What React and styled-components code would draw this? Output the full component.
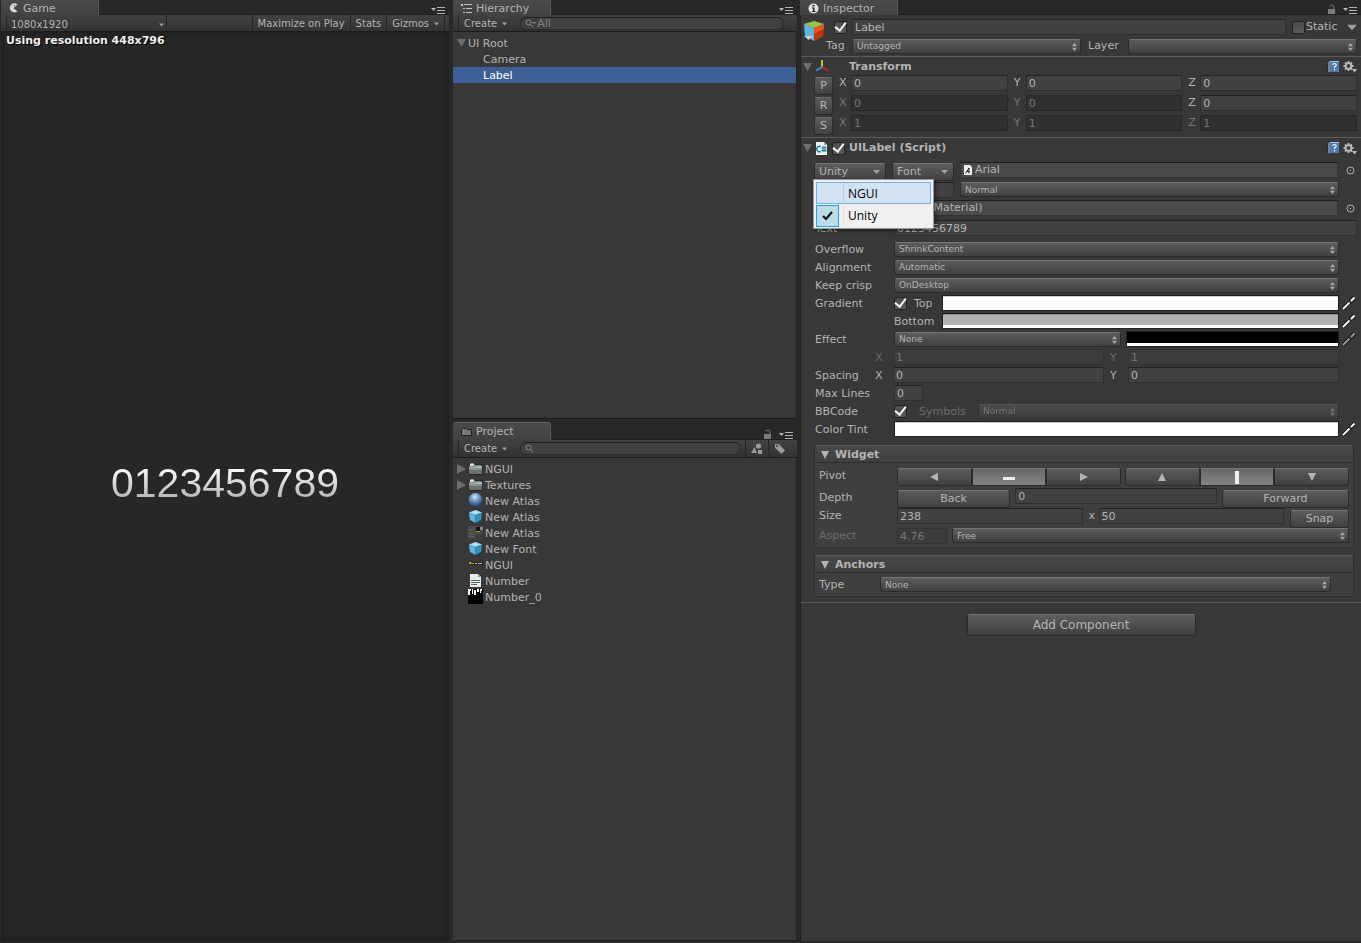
import React from 'react';
import styled, { createGlobalStyle, css } from 'styled-components';

const GlobalStyle = createGlobalStyle`
  * {
    box-sizing: border-box;
  }
  body {
    margin: 0;
    background: #282828;
    color: #b4b4b4;
    font-family: 'DejaVu Sans', Verdana, sans-serif;
    font-size: 11px;
    line-height: 16px;
  }
  button, input, select {
    margin: 0;
    padding: 0;
    border: 0;
    font: inherit;
    color: inherit;
  }
  ul {
    margin: 0;
    padding: 0;
    list-style: none;
  }
`;

const raised = css`
  border: 1px solid #2b2b2b;
  border-top-color: #757575;
  border-radius: 3px;
  background: linear-gradient(#5c5c5c, #404040);
`;

/* ---------- window layout ---------- */

const Editor = styled.main`
  display: grid;
  grid-template-columns: 450fr 347fr 564fr;
  min-height: 100vh;
  padding-bottom: 2px;
  background: #282828;
`;

const MiddleColumn = styled.div`
  display: grid;
  grid-template-rows: 420fr 521fr;
  row-gap: 3px;
  padding-left: 3px;
`;

const Panel = styled.section`
  display: flex;
  flex-direction: column;
  min-width: 0;
  padding-left: ${({ $inset }) => $inset || 0}px;
  padding-right: ${({ $end }) => $end || 0}px;
`;

const PanelHead = styled.header`
  display: flex;
  align-items: flex-end;
  height: ${({ $tall }) => ($tall ? 18 : 15)}px;
  border-bottom: 1px solid #1f1f1f;
`;

const Tab = styled.button`
  display: flex;
  align-items: center;
  gap: 4px;
  width: 98px;
  height: ${({ $top }) => ($top ? 18 : 16)}px;
  margin-bottom: -1px;
  padding: 2px 0 0 ${({ $pad }) => $pad || 8}px;
  border-top: 1px solid ${({ $top }) => ($top ? '#666' : '#484848')};
  border-right: 1px solid #5a5a5a;
  border-radius: ${({ $top }) => ($top ? '3px 3px 0 0' : '0')};
  background: linear-gradient(#4a4a4a, #424242);
`;

const HeadTools = styled.div`
  display: flex;
  align-items: flex-end;
  gap: 7px;
  margin-left: auto;
  padding: 0 4px 0 0;
`;

const ToolIcon = styled.button`
  display: flex;
  background: none;
`;

const Toolbar = styled.div`
  display: flex;
  height: ${({ $tall }) => ($tall ? 18 : 17)}px;
  padding: 0 ${({ $tall }) => ($tall ? 6 : 0)}px 0 5px;
  border-bottom: 1px solid #1c1c1c;
  background: linear-gradient(#424242, #323232);
  font-size: 10px;
`;

const ToolbarButton = styled.button`
  display: flex;
  align-items: center;
  gap: 5px;
  padding: 2px 5px 0;
  border-left: 1px solid #262626;
  background: none;
  white-space: nowrap;
`;

const ToolbarEnd = styled.div`
  display: flex;
  margin: 0 4px 0 auto;
  border-right: 1px solid #262626;
`;

const ToolbarSelect = styled.span`
  position: relative;
  display: flex;
  width: 161px;
  border: solid #262626;
  border-width: 0 1px;
  select {
    flex: 1;
    padding: 2px 0 0 4px;
    appearance: none;
    background: none;
  }
  svg {
    position: absolute;
    right: 2px;
    top: 8px;
    pointer-events: none;
  }
`;

const SearchBox = styled.label`
  display: flex;
  align-items: center;
  gap: 1px;
  flex: 1;
  height: 13px;
  margin: 2px ${({ $end }) => $end}px 0 8px;
  padding-left: 4px;
  border: 1px solid #2a2a2a;
  border-top-color: #1e1e1e;
  border-radius: 7px;
  background: #404040;
  color: #828282;
  font-size: 11px;
  input {
    flex: 1;
    width: 0;
    height: 11px;
    background: none;
  }
`;

/* ---------- game view ---------- */

const GameView = styled.div`
  display: flex;
  flex: 1;
  flex-direction: column;
  background: #272727;
  box-shadow: inset 0 0 8px #1a1a1a;
`;

const Resolution = styled.p`
  margin: 0;
  padding: 1px 5px;
  color: #f0f0f0;
  font-weight: bold;
  text-shadow: 1px 1px 1px #000;
`;

const Stage = styled.div`
  display: flex;
  flex: 1;
  align-items: center;
  justify-content: center;
  padding-bottom: 26px;
`;

const GameLabel = styled.span`
  background: linear-gradient(#fff 10%, #b3b3b3 90%);
  background-clip: text;
  color: transparent;
  font-family: 'Liberation Sans', Arial, sans-serif;
  font-size: 41px;
  line-height: 42px;
`;

/* ---------- trees ---------- */

const Tree = styled.ul`
  flex: 1;
  padding-top: 3px;
  border-right: 1px solid #222;
  border-bottom: 1px solid #1c1c1c;
  background: #383838;
`;

const TreeItem = styled.button`
  display: flex;
  align-items: center;
  gap: 2px;
  width: 100%;
  height: 16px;
  padding-left: ${({ $indent }) => $indent}px;
  background: ${({ $selected }) => ($selected ? '#3e5f96' : 'none')};
  color: ${({ $selected }) => ($selected ? '#fff' : 'inherit')};
  line-height: 14px;
  svg {
    flex: none;
  }
  span {
    padding-top: 2px;
  }
`;

/* ---------- inspector ---------- */

const Inspect = styled.div`
  flex: 1;
  border-left: 1px solid #222;
  background: #383838;
`;

const ObjectHeader = styled.div`
  display: flex;
  height: 42px;
  padding: 4px 4px 0 2px;
  border-bottom: 1px solid #5a5a5a;
`;

const ObjectRows = styled.div`
  display: flex;
  flex: 1;
  flex-direction: column;
  gap: 3px;
`;

const ObjectRow = styled.div`
  display: flex;
  align-items: center;
  height: 16px;
`;

const TagLabel = styled.label`
  width: ${({ $width }) => $width}px;
  padding-left: ${({ $pad }) => $pad || 0}px;
`;

const Component = styled.section`
  padding-bottom: ${({ $end }) => $end || 0}px;
  border-bottom: 1px solid #5a5a5a;
`;

const ComponentHead = styled.div`
  display: flex;
  align-items: center;
  gap: 3px;
  height: ${({ $height }) => $height}px;
  padding: ${({ $top }) => $top || 0}px 4px 0 2px;
`;

const ComponentTitle = styled.h2`
  flex: 1;
  margin: 0;
  padding-left: ${({ $pad }) => $pad || 0}px;
  font-size: 11px;
`;

const AxisRow = styled.div`
  display: flex;
  height: 20px;
  padding: 0 4px 0 13px;
`;

const AxisButton = styled.button`
  ${raised}
  width: 19px;
  height: 18px;
  margin-top: 2px;
  border-top-color: #6c6c6c;
`;

const Axis = styled.label`
  display: flex;
  flex: 1;
  height: 16px;
  color: ${({ $dim }) => ($dim ? '#777' : 'inherit')};
  span {
    width: 18px;
    padding-left: 6px;
  }
`;

const TextField = styled.input`
  flex: ${({ $width }) => ($width ? 'none' : '1 1 0')};
  width: ${({ $width }) => ($width ? `${$width}px` : 'auto')};
  min-width: 0;
  height: 16px;
  padding: 1px 2px 0;
  border: 1px solid #2f2f2f;
  border-top-color: #222;
  background: #414141;
  color: #b4b4b4;
  &:disabled {
    border-color: ${({ $dark }) => ($dark ? '#282828' : '#333')};
    background: ${({ $dark }) => ($dark ? '#303030' : '#3c3c3c')};
    color: #777;
  }
`;

const PopupWrap = styled.span`
  position: relative;
  display: flex;
  flex: ${({ $grow }) => $grow || 1} 1 0;
  min-width: 0;
  opacity: ${({ $dim }) => ($dim ? 0.5 : 1)};
  select {
    ${raised}
    width: 100%;
    height: 15px;
    padding: 0 4px;
    appearance: none;
    font-size: 9px;
    line-height: 12px;
    opacity: 1;
  }
  svg {
    position: absolute;
    top: 4px;
    right: 4px;
    pointer-events: none;
  }
`;

const CheckBox = styled.input`
  flex: none;
  display: grid;
  place-items: center;
  width: 13px;
  height: 13px;
  border: 1px solid #222;
  border-radius: 2px;
  appearance: none;
  background: linear-gradient(#4a4a4a, #5c5c5c);
  &:checked::after {
    content: '';
    width: 5px;
    height: 9px;
    margin-top: -3px;
    border: solid #f4f4f4;
    border-width: 0 2px 2px 0;
    transform: rotate(38deg);
  }
`;

const LabelBody = styled.div`
  position: relative;
  padding: 4px 4px 0 13px;
`;

const SourceRow = styled.div`
  display: flex;
  align-items: flex-start;
  gap: 6px;
  height: ${({ $height }) => $height}px;
`;

const DropButton = styled.button`
  ${raised}
  display: flex;
  align-items: center;
  justify-content: space-between;
  width: ${({ $width }) => $width}px;
  height: 18px;
  margin-top: 1px;
  padding: 0 5px 0 4px;
`;

const ObjectField = styled.button`
  display: flex;
  flex: 1;
  align-items: center;
  gap: 2px;
  height: 16px;
  padding: 0 2px;
  border: 1px solid #333;
  border-top-color: #1e1e1e;
  background: #4a4a4a;
`;

const Picker = styled.button`
  display: flex;
  align-items: center;
  width: 13px;
  height: 16px;
  padding-left: 2px;
  background: none;
`;

const Field = styled.div`
  display: flex;
  align-items: ${({ $start }) => ($start ? 'flex-start' : 'center')};
  height: ${({ $height }) => $height || 18}px;
  padding: 0 ${({ $full }) => ($full ? 0 : 18)}px 0 1px;
`;

const FieldLabel = styled.label`
  flex: none;
  width: ${({ $width }) => $width || 79}px;
  padding-top: 1px;
  color: ${({ $dim }) => ($dim ? '#6c6c6c' : 'inherit')};
`;

const CheckCell = styled.span`
  display: flex;
  flex: none;
  width: ${({ $width }) => $width}px;
`;

const ColorBox = styled.span`
  display: flex;
  flex: ${({ $grow }) => $grow || 1} 1 0;
  flex-direction: column;
  min-width: 0;
  height: 16px;
  margin-left: ${({ $gap }) => $gap || 0}px;
  border: 1px solid #1c1c1c;
  border-bottom-color: #222;
  background: #fff;
  input {
    width: 100%;
    height: 11px;
    appearance: none;
    background: none;
  }
  input::-webkit-color-swatch-wrapper {
    padding: 0;
  }
  input::-webkit-color-swatch {
    border: 0;
    border-top: 1px solid #0003;
    border-radius: 0;
  }
`;

const Eyedropper = styled.button`
  display: flex;
  width: 15px;
  margin: 0 -18px 0 3px;
  background: none;
  color: ${({ $dim }) => ($dim ? '#999' : '#fff')};
`;

const Menu = styled.ul`
  position: absolute;
  top: 21px;
  left: 12px;
  z-index: 2;
  width: 121px;
  padding: 2px;
  border: 1px solid #979797;
  background: #f0f0f0;
  box-shadow: 2px 2px 3px #0006;
`;

const MenuItem = styled.button`
  display: grid;
  grid-template-columns: 22px 1fr;
  align-items: center;
  column-gap: 4px;
  width: 100%;
  height: 22px;
  border: 1px solid ${({ $hover }) => ($hover ? '#78aee5' : 'transparent')};
  background: ${({ $hover }) => ($hover ? '#d1e2f2' : 'none')};
  color: #000;
  font-family: 'Open Sans', 'Noto Sans', sans-serif;
  font-size: 12px;
  text-align: left;
  b {
    padding-left: 4px;
    border-left: 1px solid ${({ $hover }) => ($hover ? '#b9cbdc' : '#e0e0e0')};
    font-weight: normal;
    line-height: 20px;
  }
`;

const MenuCheck = styled.span`
  display: grid;
  place-items: center;
  height: 22px;
  margin-left: -1px;
  border: ${({ $on }) => ($on ? '1px solid #26a0da' : '0')};
  background: ${({ $on }) => ($on ? '#bcdcec' : 'none')};
`;

const Group = styled.div`
  margin: 7px 3px 0 0;
`;

const GroupHead = styled.button`
  display: flex;
  align-items: center;
  gap: 6px;
  width: 100%;
  height: 18px;
  padding: 1px 0 0 6px;
  border: 1px solid #2c2c2c;
  border-top-color: #5a5a5a;
  border-radius: 3px 3px 0 0;
  background: linear-gradient(#484848, #404040);
  font-weight: bold;
`;

const GroupBody = styled.div`
  padding: ${({ $pad }) => $pad};
  border: 1px solid #303030;
  border-top: 0;
  background: #3f3f3f;
`;

const GroupRow = styled.div`
  display: flex;
  align-items: flex-start;
  gap: ${({ $gap }) => $gap || 0}px;
  height: ${({ $height }) => $height || 20}px;
`;

const GroupLabel = styled.label`
  flex: none;
  align-self: ${({ $mid }) => ($mid ? 'center' : 'auto')};
  width: ${({ $width }) => $width}px;
  color: ${({ $dim }) => ($dim ? '#6c6c6c' : 'inherit')};
`;

const Segments = styled.div`
  display: flex;
  flex: 1;
`;

const Segment = styled.button`
  ${raised}
  display: flex;
  flex: 1;
  align-items: center;
  justify-content: center;
  height: 18px;
  border-radius: 0;
  &:first-child {
    border-radius: 3px 0 0 3px;
  }
  &:last-child {
    border-radius: 0 3px 3px 0;
  }
  ${({ $on }) => $on && 'background: linear-gradient(#686868, #858585); color: #eee;'}
`;

const PushButton = styled.button`
  ${raised}
  flex: ${({ $grow }) => $grow || 1} 1 0;
  min-width: 0;
  height: 18px;
  margin-top: 2px;
  line-height: 14px;
`;

const SnapWrap = styled.span`
  display: flex;
  width: 59px;
`;

const AddButton = styled.button`
  ${raised}
  display: block;
  width: 229px;
  height: 22px;
  margin: 11px auto 0;
  font-size: 12px;
`;

/* ---------- icons ---------- */

const DownIcon = ({ size = 5 }) => (
  <svg width={size} height={size - 1} viewBox="0 0 7 4" fill="#a0a0a0">
    <path d="M0 0H7L3.5 4Z" />
  </svg>
);

const Fold = ({ open }) => (
  <svg width="9" height="10" viewBox="0 0 9 10" fill="#6e6e6e">
    <path d={open ? 'M0 1H9L4.5 9Z' : 'M0 0L9 5L0 10Z'} />
  </svg>
);

const GroupFold = () => (
  <svg width="8" height="8" viewBox="0 0 8 8" fill="#b4b4b4">
    <path d="M0 0H8L4 8Z" />
  </svg>
);

const MenuIcon = () => (
  <svg width="14" height="8" viewBox="0 0 14 8" fill="#b4b4b4">
    <path d="M0 2H5L2.5 5ZM6 1H14V2H6ZM6 4H14V5H6ZM6 7H14V8H6Z" />
  </svg>
);

const LockIcon = () => (
  <svg width="9" height="10" viewBox="0 0 9 10">
    <path d="M1 5H8V10H1Z" fill="#7c7c7c" />
    <path d="M7 5V3Q7 1 5 1T3 2.5" fill="none" stroke="#7c7c7c" />
  </svg>
);

const GameIcon = () => (
  <svg width="10" height="11" viewBox="0 0 10 11">
    <path d="M8.5 1.5A4.6 4.6 0 1 0 8.5 8.2L4.5 5.2Z" fill="#d8d8d8" />
    <circle cx="5.4" cy="2.6" r="0.7" fill="#555" />
  </svg>
);

const ListIcon = () => (
  <svg width="11" height="10" viewBox="0 0 11 10" fill="#c8c8c8">
    <path d="M0 0H2V2H0ZM3 0H11V1H3ZM2 4H4V5H2ZM5 4H11V5H5ZM2 8H4V9H2ZM5 8H11V9H5Z" />
  </svg>
);

const InfoIcon = () => (
  <svg width="11" height="11" viewBox="0 0 11 11">
    <circle cx="5.5" cy="5.5" r="5" fill="#e0e0e0" />
    <path d="M4.5 2H6.5V3.5H4.5ZM4 4.5H6.5V8H7.5V9H4V8H5V5.5H4Z" fill="#222" />
  </svg>
);

const TabFolder = () => (
  <svg width="11" height="10" viewBox="0 0 11 10">
    <path d="M0.5 8.5V2.5L2 1.5H5L6 2.5H10.5V8.5Z" fill="#777" stroke="#222" />
  </svg>
);

const SearchIcon = ({ menu }) => (
  <svg width="11" height="9" viewBox="0 0 11 9" fill="none" stroke="#8c8c8c">
    <circle cx="3.5" cy="3.5" r="2.5" />
    <path d="M5.3 5.3L8 8" />
    {menu && <path d="M7 3H11L9 5Z" fill="#8c8c8c" stroke="none" />}
  </svg>
);

const ShapesIcon = () => (
  <svg width="12" height="12" viewBox="0 0 12 12" fill="#999">
    <circle cx="7.5" cy="3" r="2.6" />
    <path d="M0 10L3.5 4L6 10ZM7 7H11V11H7Z" />
  </svg>
);

const TagIcon = () => (
  <svg width="12" height="12" viewBox="0 0 12 12">
    <path d="M1 1H5L11 7.5L7.5 11L1 5Z" fill="#999" />
    <circle cx="3" cy="3" r="0.9" fill="#333" />
  </svg>
);

const FolderIcon = () => (
  <svg width="15" height="14" viewBox="0 0 15 14">
    <path d="M1 12.5V2H2L3 1H6L7 2.5H14V12.5Z" fill="#7e8889" stroke="#222" />
    <path d="M2 1.5H6V4H2Z" fill="#d5dada" />
    <path d="M1 5H7L8 4H14V6H1Z" fill="#a9b2b2" />
    <path d="M1 6H14V8H1Z" fill="#87908f" />
    <path d="M1 8H14V12H1Z" fill="#657173" />
  </svg>
);

const SphereIcon = () => (
  <svg width="15" height="15" viewBox="0 0 15 15">
    <defs>
      <radialGradient id="ball" cx="45%" cy="28%" r="65%">
        <stop offset="0" stopColor="#dce8f2" />
        <stop offset="0.45" stopColor="#6f9ccb" />
        <stop offset="1" stopColor="#25466e" />
      </radialGradient>
    </defs>
    <circle cx="7.5" cy="7" r="7" fill="url(#ball)" />
  </svg>
);

const CubeIcon = () => (
  <svg width="15" height="15" viewBox="0 0 15 15">
    <path d="M7.5 1L14 3.5L7.5 6L1 3.5Z" fill="#a9e2fa" />
    <path d="M1 3.5L7.5 6V14L2 11Z" fill="#59b9e4" />
    <path d="M14 3.5L7.5 6V14L13 11Z" fill="#3091c4" />
  </svg>
);

const AtlasIcon = () => (
  <svg width="15" height="15" viewBox="0 0 15 15">
    <path d="M0 1H15V14H0Z" fill="#4a4a4a" />
    <path d="M0 4H7V5H0ZM1 8H6V9H1ZM0 11H8V12H0Z" fill="#5b5b5b" />
    <path d="M8 2H12V6H8Z" fill="#111" />
    <path d="M12 2H15V5H12Z" fill="#8a8a8a" />
    <path d="M8 6H12V7H8Z" fill="#b99a35" />
    <path d="M7 9H15V14H7Z" fill="#3e3e3e" />
  </svg>
);

const LogoStrip = () => (
  <svg width="15" height="15" viewBox="0 0 15 15">
    <path d="M0 5H15V8H0Z" fill="#262626" />
    <path d="M1 5H3V7H1Z" fill="#d8a020" />
    <path d="M3 6H6V7H3Z" fill="#98a830" />
    <path d="M7 6H9V7H7ZM10 6H14V7H10Z" fill="#bbb" />
  </svg>
);

const FileIcon = () => (
  <svg width="15" height="15" viewBox="0 0 15 15">
    <path d="M2 1H10L13 4V14H2Z" fill="#e8ecec" />
    <path d="M10 1L13 4H10Z" fill="#999" />
    <path d="M3 7H12V8H3ZM3 9H12V10H3ZM3 11H9V12H3Z" fill="#566" />
  </svg>
);

const NumberTexture = () => (
  <svg width="15" height="15" viewBox="0 0 15 15">
    <path d="M0 0H15V15H0Z" fill="#000" />
    <path d="M0 0H3V2H2V6H0ZM4 0H5V5H4ZM6 1H8V6H6ZM9 0H11V3H9ZM12 0H14V2H13V4H12Z" fill="#fff" />
  </svg>
);

const ObjectCube = () => (
  <svg width="22" height="23" viewBox="0 0 22 23">
    <path d="M1 5L11 2L21 5L11 9Z" fill="#9cc545" />
    <path d="M1 5L11 9V22L2 17Z" fill="#5eb5e0" />
    <path d="M21 5L11 9V22L20 17Z" fill="#e8561c" />
    <path d="M11 15L20 10V17L11 22Z" fill="#c13509" />
    <path d="M1 17H10L5.5 21Z" fill="#d0d0d0" />
  </svg>
);

const TransformIcon = () => (
  <svg width="16" height="16" viewBox="0 0 16 16" fill="none" strokeWidth="2">
    <path d="M7 1V8" stroke="#9bd32a" />
    <path d="M7 8L1 11.5" stroke="#2f9bd8" />
    <path d="M7 8L13 11.5" stroke="#d5202a" />
  </svg>
);

const ScriptIcon = () => (
  <svg width="14" height="15" viewBox="0 0 14 15">
    <path d="M1 1H9L12 4V14H1Z" fill="#eef2f3" />
    <path d="M9 1L12 4H9Z" fill="#9aa5aa" />
    <path d="M5.8 5.5A2.8 2.8 0 1 0 5.8 10.5" fill="none" stroke="#1279ad" strokeWidth="1.5" />
    <path d="M8 5V11M10 5V11M6.5 7H11.5M6.5 9.5H11.5" fill="none" stroke="#1279ad" />
  </svg>
);

const FontIcon = () => (
  <svg width="10" height="12" viewBox="0 0 10 12">
    <path d="M1 1H7L9 3V11H1Z" fill="#eee" />
    <path d="M2.5 9.5L6 4V9.5M4 7.5H6.5" fill="none" stroke="#222" />
  </svg>
);

const HelpIcon = () => (
  <svg width="13" height="14" viewBox="0 0 13 14">
    <path d="M1 1H3V13H1Z" fill="#cfdcec" stroke="#16263f" />
    <path d="M3 1H12V12H3Z" fill="#4d78b0" />
    <path d="M3 1H12V2H3Z" fill="#a9c3e2" />
    <path d="M5.8 5Q5.8 3.5 7.5 3.5T9.2 5Q9.2 6 7.5 7V8M7.5 9V10.5" fill="none" stroke="#fff" strokeWidth="1.2" />
  </svg>
);

const GearIcon = () => (
  <svg width="14" height="13" viewBox="0 0 14 13">
    <circle cx="5.5" cy="6" r="2.8" fill="none" stroke="#bdbdbd" strokeWidth="1.8" />
    <path
      d="M5.5 1V3M5.5 9V11M0.5 6H2.5M8.5 6H10.5M2 2.5L3.4 3.9M7.6 8.1L9 9.5M2 9.5L3.4 8.1M7.6 3.9L9 2.5"
      stroke="#bdbdbd"
      strokeWidth="1.8"
    />
    <path d="M9 9H14L11.5 12.5Z" fill="#bdbdbd" />
  </svg>
);

const TargetIcon = () => (
  <svg width="9" height="9" viewBox="0 0 9 9">
    <circle cx="4.5" cy="4.5" r="3.5" fill="none" stroke="#b4b4b4" />
    <path d="M4 4H5V5H4Z" fill="#d0d0d0" />
  </svg>
);

const DropperIcon = () => (
  <svg width="14" height="14" viewBox="0 0 14 14" fill="none">
    <path d="M1 13L8 6" stroke="#111" strokeWidth="3.6" />
    <path d="M9 5L12.5 1.5" stroke="#111" strokeWidth="4.4" />
    <path d="M1 13L8.5 5.5" stroke="currentColor" strokeWidth="1.8" />
    <path d="M6.5 4.5L9.5 7.5" stroke="#222" strokeWidth="1.4" />
    <path d="M9 5L12.5 1.5" stroke="currentColor" strokeWidth="2.2" />
  </svg>
);

const TickIcon = () => (
  <svg width="11" height="10" viewBox="0 0 11 10">
    <path d="M1 5L4 8L10 1" fill="none" stroke="#111" strokeWidth="2.2" />
  </svg>
);

const UpDownIcon = () => (
  <svg width="5" height="8" viewBox="0 0 5 8" fill="#a8a8a8">
    <path d="M0 3.2L2.5 0L5 3.2ZM0 4.8L2.5 8L5 4.8Z" />
  </svg>
);

const pivotShapes = {
  Left: 'M10 2V10L2 6Z',
  Middle: 'M0 6H12V9H0Z',
  Right: 'M2 2V10L10 6Z',
  Top: 'M2 10H10L6 2Z',
  Center: 'M4 0H8V13H4Z',
  Bottom: 'M2 2H10L6 10Z',
};

const PivotIcon = ({ name }) => (
  <svg width="12" height="13" viewBox="0 0 12 13" fill="currentColor">
    <path d={pivotShapes[name]} />
  </svg>
);

/* ---------- parts ---------- */

function Popup({ id, label, value, grow, disabled }) {
  return (
    <PopupWrap $grow={grow} $dim={disabled}>
      <select id={id} aria-label={label} disabled={disabled}>
        <option>{value}</option>
      </select>
      <UpDownIcon />
    </PopupWrap>
  );
}

function ColorField({ id, label, value, grow, gap }) {
  return (
    <ColorBox $grow={grow} $gap={gap}>
      <input type="color" id={id} aria-label={label} defaultValue={value} />
    </ColorBox>
  );
}

function Dropper({ dim }) {
  return (
    <Eyedropper aria-label="Pick color" $dim={dim}>
      <DropperIcon />
    </Eyedropper>
  );
}

function WindowTools({ lock }) {
  return (
    <HeadTools>
      {lock && <ToolIcon aria-label="Lock"><LockIcon /></ToolIcon>}
      <ToolIcon aria-label="Window menu"><MenuIcon /></ToolIcon>
    </HeadTools>
  );
}

function ComponentTools() {
  return (
    <>
      <ToolIcon aria-label="Help"><HelpIcon /></ToolIcon>
      <ToolIcon aria-label="Settings"><GearIcon /></ToolIcon>
    </>
  );
}

/* ---------- panels ---------- */

function Game() {
  return (
    <Panel $inset={1} $end={1}>
      <PanelHead>
        <Tab><GameIcon />Game</Tab>
        <WindowTools />
      </PanelHead>
      <Toolbar>
        <ToolbarSelect>
          <select aria-label="Aspect ratio">
            <option>1080x1920</option>
          </select>
          <DownIcon />
        </ToolbarSelect>
        <ToolbarEnd>
          <ToolbarButton>Maximize on Play</ToolbarButton>
          <ToolbarButton>Stats</ToolbarButton>
          <ToolbarButton>Gizmos <DownIcon /></ToolbarButton>
        </ToolbarEnd>
      </Toolbar>
      <GameView>
        <Resolution>Using resolution 448x796</Resolution>
        <Stage>
          <GameLabel>0123456789</GameLabel>
        </Stage>
      </GameView>
    </Panel>
  );
}

function Hierarchy() {
  return (
    <Panel>
      <PanelHead>
        <Tab><ListIcon />Hierarchy</Tab>
        <WindowTools />
      </PanelHead>
      <Toolbar>
        <ToolbarButton>Create <DownIcon /></ToolbarButton>
        <SearchBox $end={13}>
          <SearchIcon menu />
          <input aria-label="Search hierarchy" defaultValue="All" />
        </SearchBox>
      </Toolbar>
      <Tree>
        <li><TreeItem $indent={4}><Fold open /><span>UI Root</span></TreeItem></li>
        <li><TreeItem $indent={30}><span>Camera</span></TreeItem></li>
        <li><TreeItem $indent={30} $selected><span>Label</span></TreeItem></li>
      </Tree>
    </Panel>
  );
}

const assets = [
  { name: 'NGUI', icon: FolderIcon, folder: true },
  { name: 'Textures', icon: FolderIcon, folder: true },
  { name: 'New Atlas', icon: SphereIcon },
  { name: 'New Atlas', icon: CubeIcon },
  { name: 'New Atlas', icon: AtlasIcon },
  { name: 'New Font', icon: CubeIcon },
  { name: 'NGUI', icon: LogoStrip },
  { name: 'Number', icon: FileIcon },
  { name: 'Number_0', icon: NumberTexture },
];

function Project() {
  return (
    <Panel>
      <PanelHead $tall>
        <Tab $top><TabFolder />Project</Tab>
        <WindowTools lock />
      </PanelHead>
      <Toolbar $tall>
        <ToolbarButton>Create <DownIcon /></ToolbarButton>
        <SearchBox $end={4}>
          <SearchIcon />
          <input aria-label="Search project" />
        </SearchBox>
        <ToolbarButton aria-label="Filter by type"><ShapesIcon /></ToolbarButton>
        <ToolbarButton aria-label="Filter by label"><TagIcon /></ToolbarButton>
      </Toolbar>
      <Tree>
        {assets.map(({ name, icon: Icon, folder }, i) => (
          <li key={i}>
            <TreeItem $indent={folder ? 4 : 15}>
              {folder && <Fold />}
              <Icon />
              <span>{name}</span>
            </TreeItem>
          </li>
        ))}
      </Tree>
    </Panel>
  );
}

const transformRows = [
  { key: 'P', name: 'Position', values: [['X', '0'], ['Y', '0'], ['Z', '0']] },
  { key: 'R', name: 'Rotation', values: [['X', '0', true], ['Y', '0', true], ['Z', '0']] },
  { key: 'S', name: 'Scale', values: [['X', '1', true], ['Y', '1', true], ['Z', '1', true]] },
];

function Transform() {
  return (
    <Component $end={2}>
      <ComponentHead $height={18} $top={1}>
        <Fold open />
        <TransformIcon />
        <ComponentTitle $pad={15}>Transform</ComponentTitle>
        <ComponentTools />
      </ComponentHead>
      {transformRows.map((row) => (
        <AxisRow key={row.key}>
          <AxisButton aria-label={`Reset ${row.name}`}>{row.key}</AxisButton>
          {row.values.map(([axis, value, off]) => (
            <Axis key={axis} $dim={off}>
              <span>{axis}</span>
              <TextField defaultValue={value} disabled={off} $dark />
            </Axis>
          ))}
        </AxisRow>
      ))}
    </Component>
  );
}

function FontSource() {
  return (
    <>
      <SourceRow $height={20}>
        <DropButton $width={72}>Unity <DownIcon size={7} /></DropButton>
        <DropButton $width={62}>Font <DownIcon size={7} /></DropButton>
        <ObjectField><FontIcon />Arial</ObjectField>
        <Picker aria-label="Select font"><TargetIcon /></Picker>
      </SourceRow>
      <Menu>
        <li>
          <MenuItem $hover><MenuCheck /><b>NGUI</b></MenuItem>
        </li>
        <li>
          <MenuItem><MenuCheck $on><TickIcon /></MenuCheck><b>Unity</b></MenuItem>
        </li>
      </Menu>
      <Field $height={18} $start>
        <FieldLabel as="span" />
        <TextField $width={60} aria-label="Font size" />
        <FieldLabel as="span" $width={6} />
        <Popup label="Font style" value="Normal" />
      </Field>
      <SourceRow $height={20}>
        <FieldLabel as="span" $width={74} />
        <ObjectField>None (Material)</ObjectField>
        <Picker aria-label="Select material"><TargetIcon /></Picker>
      </SourceRow>
      <Field $height={20} $full $start>
        <FieldLabel htmlFor="text">Text</FieldLabel>
        <TextField id="text" defaultValue="0123456789" />
      </Field>
    </>
  );
}

function PairRow({ label, name, value, dim }) {
  return (
    <Field>
      <FieldLabel as="span" $width={60}>{label}</FieldLabel>
      <FieldLabel $width={18} $dim={dim} htmlFor={`${name}-x`}>X</FieldLabel>
      <TextField id={`${name}-x`} defaultValue={value} disabled={dim} />
      <FieldLabel as="span" $width={6} />
      <FieldLabel $width={18} $dim={dim} htmlFor={`${name}-y`}>Y</FieldLabel>
      <TextField id={`${name}-y`} defaultValue={value} disabled={dim} />
    </Field>
  );
}

function Widget() {
  return (
    <Group>
      <GroupHead><GroupFold />Widget</GroupHead>
      <GroupBody $pad="5px 4px 2px 4px">
        <GroupRow $gap={4}>
          <GroupLabel as="span" $width={74}>Pivot</GroupLabel>
          <Segments>
            {['Left', 'Middle', 'Right'].map((name) => (
              <Segment key={name} aria-label={name} $on={name === 'Middle'}><PivotIcon name={name} /></Segment>
            ))}
          </Segments>
          <Segments>
            {['Top', 'Center', 'Bottom'].map((name) => (
              <Segment key={name} aria-label={name} $on={name === 'Center'}><PivotIcon name={name} /></Segment>
            ))}
          </Segments>
        </GroupRow>
        <GroupRow $gap={5}>
          <GroupLabel $width={73} $mid htmlFor="depth">Depth</GroupLabel>
          <PushButton $grow={112}>Back</PushButton>
          <PopupWrap $grow={203}>
            <TextField id="depth" defaultValue="0" />
          </PopupWrap>
          <PushButton $grow={126}>Forward</PushButton>
        </GroupRow>
        <GroupRow $gap={6}>
          <GroupLabel $width={72} htmlFor="width">Size</GroupLabel>
          <TextField id="width" defaultValue="238" />
          <GroupLabel $width={4} htmlFor="height">x</GroupLabel>
          <TextField id="height" defaultValue="50" />
          <SnapWrap><PushButton>Snap</PushButton></SnapWrap>
        </GroupRow>
        <GroupRow $gap={5} $height={17}>
          <GroupLabel $width={73} $dim htmlFor="aspect">Aspect</GroupLabel>
          <TextField id="aspect" $width={50} defaultValue="4.76" disabled />
          <Popup label="Aspect mode" value="Free" />
        </GroupRow>
      </GroupBody>
    </Group>
  );
}

function Anchors() {
  return (
    <Group>
      <GroupHead><GroupFold />Anchors</GroupHead>
      <GroupBody $pad="4px 22px 2px 4px">
        <GroupRow $height={17}>
          <GroupLabel $width={61} htmlFor="anchor">Type</GroupLabel>
          <Popup id="anchor" value="None" />
        </GroupRow>
      </GroupBody>
    </Group>
  );
}

function UILabel() {
  return (
    <Component $end={5}>
      <ComponentHead $height={20}>
        <Fold open />
        <ScriptIcon />
        <CheckBox type="checkbox" aria-label="Enable UILabel" defaultChecked />
        <ComponentTitle $pad={1}>UILabel (Script)</ComponentTitle>
        <ComponentTools />
      </ComponentHead>
      <LabelBody>
        <FontSource />
        <Field>
          <FieldLabel htmlFor="overflow">Overflow</FieldLabel>
          <Popup id="overflow" value="ShrinkContent" />
        </Field>
        <Field>
          <FieldLabel htmlFor="alignment">Alignment</FieldLabel>
          <Popup id="alignment" value="Automatic" />
        </Field>
        <Field>
          <FieldLabel htmlFor="crisp">Keep crisp</FieldLabel>
          <Popup id="crisp" value="OnDesktop" />
        </Field>
        <Field>
          <FieldLabel htmlFor="gradient">Gradient</FieldLabel>
          <CheckCell $width={20}>
            <CheckBox id="gradient" type="checkbox" defaultChecked />
          </CheckCell>
          <FieldLabel $width={28} htmlFor="top">Top</FieldLabel>
          <ColorField id="top" value="#ffffff" />
          <Dropper />
        </Field>
        <Field>
          <FieldLabel as="span" />
          <FieldLabel $width={48} htmlFor="bottom">Bottom</FieldLabel>
          <ColorField id="bottom" value="#b3b3b3" />
          <Dropper />
        </Field>
        <Field>
          <FieldLabel htmlFor="effect">Effect</FieldLabel>
          <Popup id="effect" value="None" grow={228} />
          <ColorField label="Effect color" value="#000000" grow={211} gap={5} />
          <Dropper dim />
        </Field>
        <PairRow name="effect-distance" value="1" dim />
        <PairRow name="spacing" label="Spacing" value="0" />
        <Field>
          <FieldLabel htmlFor="lines">Max Lines</FieldLabel>
          <TextField id="lines" $width={29} defaultValue="0" />
        </Field>
        <Field>
          <FieldLabel htmlFor="bbcode">BBCode</FieldLabel>
          <CheckCell $width={25}>
            <CheckBox id="bbcode" type="checkbox" defaultChecked />
          </CheckCell>
          <FieldLabel $width={59} $dim htmlFor="symbols">Symbols</FieldLabel>
          <Popup id="symbols" value="Normal" disabled />
        </Field>
        <Field>
          <FieldLabel htmlFor="tint">Color Tint</FieldLabel>
          <ColorField id="tint" value="#ffffff" />
          <Dropper />
        </Field>
        <Widget />
        <Anchors />
      </LabelBody>
    </Component>
  );
}

function Inspector() {
  return (
    <Panel $inset={3}>
      <PanelHead>
        <Tab><InfoIcon />Inspector</Tab>
        <WindowTools lock />
      </PanelHead>
      <Inspect>
        <ObjectHeader>
          <ObjectCube />
          <ObjectRows>
            <ObjectRow>
              <TagLabel as="span" $width={9} />
              <CheckBox type="checkbox" aria-label="Active" defaultChecked />
              <TagLabel as="span" $width={5} />
              <TextField aria-label="Name" defaultValue="Label" />
              <TagLabel as="span" $width={6} />
              <CheckBox type="checkbox" id="static" />
              <TagLabel $width={36} $pad={1} htmlFor="static">Static</TagLabel>
              <TagLabel as="span" $width={6} />
              <ToolIcon aria-label="Static options">
                <DownIcon size={10} />
              </ToolIcon>
            </ObjectRow>
            <ObjectRow>
              <TagLabel $width={27} $pad={1} htmlFor="tag">Tag</TagLabel>
              <Popup id="tag" value="Untagged" />
              <TagLabel $width={47} $pad={7} htmlFor="layer">Layer</TagLabel>
              <Popup id="layer" value="" />
            </ObjectRow>
          </ObjectRows>
        </ObjectHeader>
        <Transform />
        <UILabel />
        <AddButton>Add Component</AddButton>
      </Inspect>
    </Panel>
  );
}

export default function App() {
  return (
    <>
      <GlobalStyle />
      <Editor>
        <Game />
        <MiddleColumn>
          <Hierarchy />
          <Project />
        </MiddleColumn>
        <Inspector />
      </Editor>
    </>
  );
}
